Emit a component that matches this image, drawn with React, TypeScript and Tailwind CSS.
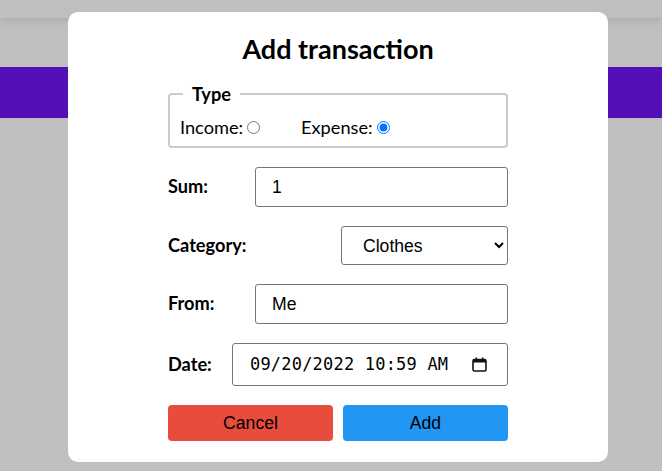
export default function App() {
  return (
    <div className="relative h-[471px] w-[662px] overflow-hidden bg-[#bfbfbf] font-['Lato',sans-serif]">
      {/* page behind the overlay */}
      <div className="h-[18px] bg-[#bfbfbf] shadow-[0_2px_8px_rgba(0,0,0,0.12)]" />
      <div className="mt-[49px] h-[51px] bg-[#540fb7]" />

      {/* modal */}
      <div className="absolute left-[68px] top-[12px] w-[540px] rounded-[10px] bg-white px-[100px] pb-[21px] pt-[21px]">
        <h2 className="text-center text-[27px] font-bold leading-[32px] text-black">Add transaction</h2>

        <form className="mt-[18px] flex flex-col gap-[19px] text-[18.2px] text-black">
          <fieldset className="rounded-[4px] border-2 border-[#cbcbcb] px-[10px] pb-[8px] pt-[11px]">
            <legend className="ml-[3px] px-[9px] font-bold leading-[22px]">Type</legend>
            <div className="flex items-center leading-[22px]">
              <label className="flex items-center">
                Income:
                <input type="radio" name="type" className="ml-[4px] h-[13px] w-[13px]" />
              </label>
              <label className="ml-[41px] flex items-center">
                Expense:
                <input type="radio" name="type" defaultChecked className="ml-[4px] h-[13px] w-[13px]" />
              </label>
            </div>
          </fieldset>

          <div className="flex items-center justify-between">
            <label className="font-bold">Sum:</label>
            <input
              defaultValue="1"
              className="h-[40px] w-[253px] rounded-[3px] border border-[#767676] px-[16px] font-['Liberation_Sans',Arial,sans-serif] text-[17.6px]"
            />
          </div>

          <div className="flex items-center justify-between">
            <label className="font-bold">Category:</label>
            <select
              defaultValue="Clothes"
              className="h-[39px] w-[167px] rounded-[3px] border border-[#767676] pl-[17px] pr-[4px] font-['Liberation_Sans',Arial,sans-serif] text-[17.6px]"
            >
              <option>Food</option>
              <option>Clothes</option>
              <option>Salary</option>
            </select>
          </div>

          <div className="flex items-center justify-between">
            <label className="font-bold">From:</label>
            <input
              defaultValue="Me"
              className="h-[40px] w-[253px] rounded-[3px] border border-[#767676] px-[16px] font-['Liberation_Sans',Arial,sans-serif] text-[17.6px]"
            />
          </div>

          <div className="flex items-center justify-between">
            <label className="font-bold">Date:</label>
            <div className="flex h-[43px] w-[276px] items-center rounded-[3px] border border-[#767676] pl-[17px] pr-[20px] font-['DejaVu_Sans_Mono',monospace] text-[17px] tracking-[0.2px]">
              <span className="flex-1">09/20/2022 10:59 AM</span>
              <svg width="15" height="15" viewBox="0 0 15 15" className="shrink-0">
                <rect x="1" y="2.5" width="13" height="11.5" rx="1.5" fill="none" stroke="#111" strokeWidth="1.6" />
                <rect x="1" y="2.5" width="13" height="3" fill="#111" />
                <rect x="3.5" y="0.5" width="1.6" height="3" fill="#111" />
                <rect x="9.9" y="0.5" width="1.6" height="3" fill="#111" />
              </svg>
            </div>
          </div>

          <div className="flex justify-between">
            <button
              type="button"
              className="h-[36px] w-[165px] rounded-[4px] bg-[#e84c3d] font-['Liberation_Sans',Arial,sans-serif] text-[17.6px] text-black"
            >
              Cancel
            </button>
            <button
              type="button"
              className="h-[36px] w-[165px] rounded-[4px] bg-[#2196f3] font-['Liberation_Sans',Arial,sans-serif] text-[17.6px] text-black"
            >
              Add
            </button>
          </div>
        </form>
      </div>
    </div>
  );
}
